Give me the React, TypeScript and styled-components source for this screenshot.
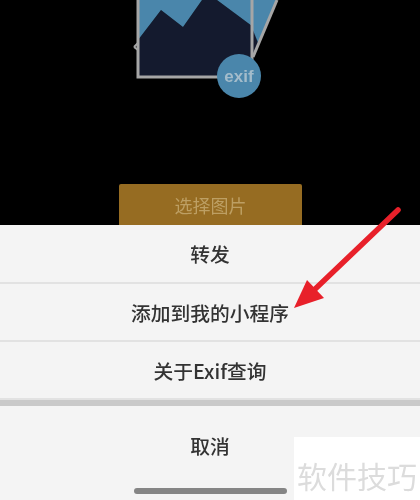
import { createGlobalStyle, styled } from 'styled-components';

const GlobalStyle = createGlobalStyle`
	html, body {
		margin: 0;
		padding: 0;
		background: #000;
	}
`;

const Page = styled.div`
	position: relative;
	width: 420px;
	height: 500px;
	overflow: hidden;
	display: flex;
	flex-direction: column;
	font-family: 'Noto Sans CJK SC', 'Liberation Sans', sans-serif;
	filter: blur(0.45px);
`;

const Hero = styled.div`
	height: 225px;
	flex-shrink: 0;
	background: #000;
	display: flex;
	flex-direction: column;
	align-items: center;
`;

const Illustration = styled.svg`
	display: block;
	width: 160px;
	height: 100px;
	margin-left: -13px;
	margin-bottom: 84px;
`;

const PickButton = styled.div`
	width: 183px;
	height: 41px;
	margin-left: 1px;
	background: #966c22;
	color: #bd9f63;
	border-radius: 2px 2px 0 0;
	font-size: 18px;
	display: flex;
	align-items: center;
	justify-content: center;
`;

const Sheet = styled.div`
	flex: 1;
	display: flex;
	flex-direction: column;
	background: #f4f4f4;
`;

const Row = styled.div<{ $height: number }>`
	height: ${(props) => props.$height}px;
	flex-shrink: 0;
	display: flex;
	align-items: center;
	justify-content: center;
	border-bottom: 2px solid #e2e2e2;
	box-sizing: border-box;
	color: #333;
	font-size: 19.75px;
	font-weight: 500;
`;

const GroupGap = styled.div`
	height: 6px;
	flex-shrink: 0;
	background: #c9c9c9;
`;

const CancelRow = styled.div`
	flex: 1;
	display: flex;
	flex-direction: column;
	align-items: center;
	color: #333;
	font-size: 19.75px;
	font-weight: 500;
`;

const CancelLabel = styled.div`
	height: 78px;
	display: flex;
	align-items: center;
`;

const HomeBar = styled.div`
	width: 153px;
	height: 6px;
	margin-top: 4px;
	border-radius: 3px;
	background: #858585;
`;

const ArrowOverlay = styled.svg`
	position: absolute;
	left: 280px;
	top: 195px;
	width: 130px;
	height: 125px;
`;

const Watermark = styled.div`
	position: absolute;
	right: 0;
	bottom: 0;
	width: 126px;
	height: 63px;
	background: #fff;
	color: #dcdcdc;
	font-size: 30px;
	display: flex;
	align-items: center;
	justify-content: center;
	padding-top: 12px;
	box-sizing: border-box;
`;

const App = () => (
	<>
		<GlobalStyle />
		<Page>
			<Hero>
				<Illustration viewBox='124 0 160 100'>
					<polygon points='138,40 161,10 183,27 202,0 217,0 252,26 259,45 253,57 240,77 138,77' fill='#141a2e' />
					<polygon points='252,0 277,0 259,45 252,28' fill='#4a86ab' />
					<path d='M277 0 L253 57' stroke='#a6a6a6' strokeWidth='3' fill='none' />
					<path d='M134 47 L138 43 M138 50 L134 47' stroke='#a6a6a6' strokeWidth='2' fill='none' />
					<polygon points='138,0 202,0 183,27 161,10 138,40' fill='#4a86ab' />
					<polygon points='217,0 252,0 252,26' fill='#4a86ab' />
					<path d='M138 0 V77 H252 V0' stroke='#a6a6a6' strokeWidth='3' fill='none' />
					<circle cx='239' cy='76' r='22' fill='#4a86ab' />
					<text
						x='239'
						y='82'
						textAnchor='middle'
						fontSize='17'
						fontWeight='700'
						fill='#a3bccb'
						fontFamily="'Liberation Sans', sans-serif"
					>
						exif
					</text>
				</Illustration>
				<PickButton>选择图片</PickButton>
			</Hero>
			<Sheet>
				<Row $height={59}>转发</Row>
				<Row $height={58}>添加到我的小程序</Row>
				<Row $height={58}>关于Exif查询</Row>
				<GroupGap />
				<CancelRow>
					<CancelLabel>取消</CancelLabel>
					<HomeBar />
				</CancelRow>
			</Sheet>
			<ArrowOverlay viewBox='280 195 130 125'>
				<path d='M398 210 L312 292' stroke='#e8202a' strokeWidth='5.5' strokeLinecap='round' fill='none' />
				<polygon points='294,308 307,280 324,298' fill='#e8202a' />
			</ArrowOverlay>
			<Watermark>软件技巧</Watermark>
		</Page>
	</>
);

export default App;
